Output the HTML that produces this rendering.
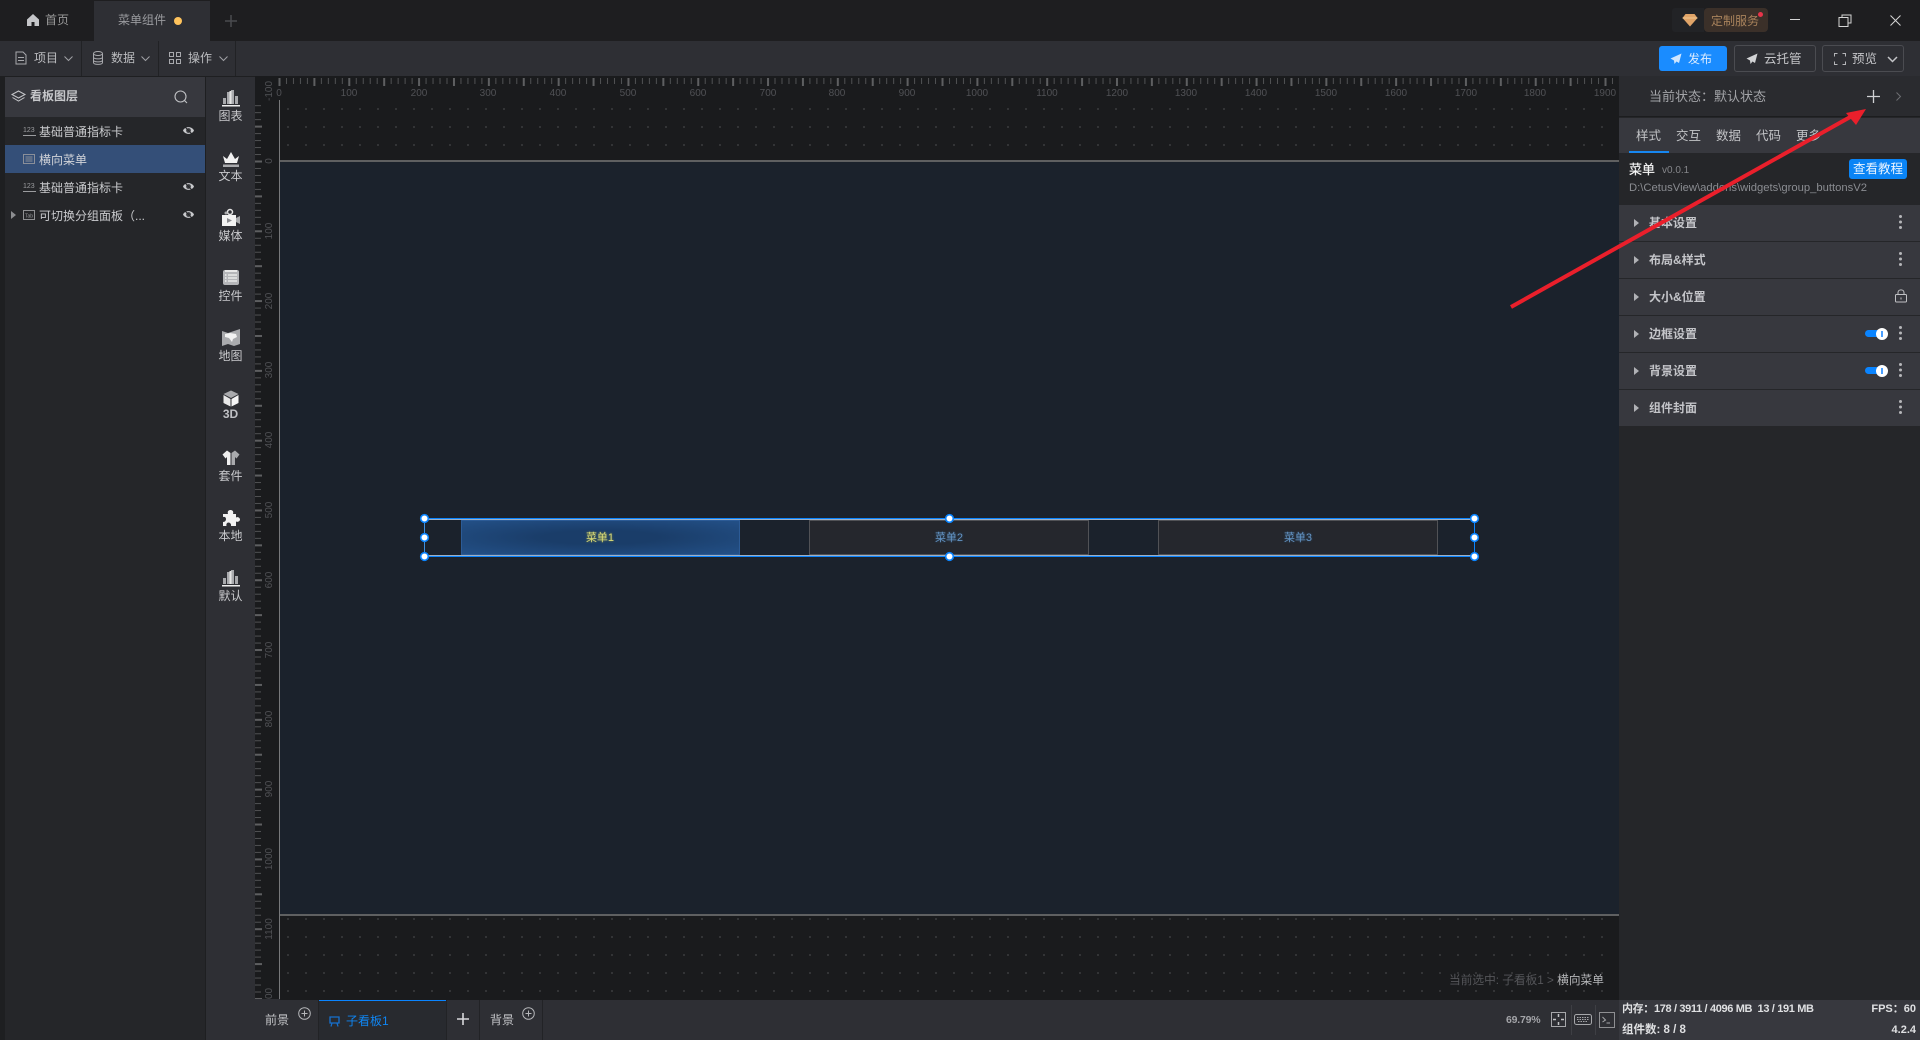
<!DOCTYPE html>
<html><head><meta charset="utf-8"><style>
html,body{margin:0;padding:0;background:#1e1f21;}
#p{position:relative;width:1920px;height:1040px;overflow:hidden;background:#1e1f21;font-family:"Liberation Sans","Noto Sans CJK SC",sans-serif;font-size:12px;color:#c8c9cc;}
.b{position:absolute;}
.t{position:absolute;white-space:nowrap;line-height:16px;}
.c{transform:translateX(-50%);}
svg{position:absolute;overflow:visible;}
.s{left:1619px;width:301px;height:36px;background:#37383e;position:absolute;}
.st{position:absolute;left:30px;top:10px;line-height:16px;font-weight:700;font-size:12px;color:#c4c5c9;}
.tr{position:absolute;left:15px;top:14px;width:0;height:0;border-left:5px solid #b0b1b5;border-top:4.5px solid transparent;border-bottom:4.5px solid transparent;}
.d{position:absolute;left:280px;top:10px;width:3px;height:3px;border-radius:50%;background:#b5b6b9;box-shadow:0 5.5px 0 #b5b6b9,0 11px 0 #b5b6b9;}
.lb{color:#c9cacd;font-size:12px;}
</style></head><body><div id="p">

<!-- top tab bar -->
<div class="b" style="left:0;top:0;width:1920px;height:41px;background:#1e1e20"></div>
<div class="b" style="left:94px;top:1px;width:116px;height:40px;background:#2e2f34"></div>
<svg style="left:26px;top:13px" width="14" height="14" viewBox="0 0 14 14"><path d="M7 1 L1 6.5 V13 H5.5 V9 H8.5 V13 H13 V6.5 Z" fill="#c5c6c9"/></svg>
<div class="t" style="left:45px;top:12px;color:#999">首页</div>
<div class="t" style="left:118px;top:12px;color:#9a9b9f">菜单组件</div>
<div class="b" style="left:174px;top:17px;width:8px;height:8px;border-radius:50%;background:#ffc35c"></div>
<svg style="left:224px;top:14px" width="14" height="14"><path d="M7 1V13M1 7H13" stroke="#4a4b4f" stroke-width="1.5"/></svg>

<!-- window controls -->
<div class="b" style="left:1672px;top:8px;width:32px;height:24px;background:#222326;border-radius:3px 0 0 3px"></div>
<div class="b" style="left:1704px;top:8px;width:64px;height:24px;background:#3b3029;border-radius:4px"></div>
<svg style="left:1682px;top:13px" width="16" height="14" viewBox="0 0 16 14"><path d="M3.5 1H12.5L15.5 5L8 13.5L0.5 5Z" fill="#e0a468"/><path d="M0.5 5H15.5" stroke="#f2c890" stroke-width="1"/></svg>
<div class="t" style="left:1711px;top:13px;color:#a9835c;letter-spacing:0">定制服务</div>
<div class="b" style="left:1758px;top:12px;width:5px;height:5px;border-radius:50%;background:#e8344a"></div>
<div class="b" style="left:1790px;top:19px;width:10px;height:1px;background:#d5d5d5"></div>
<svg style="left:1838px;top:14px" width="14" height="13"><path d="M4 3V1H13V9H10" fill="none" stroke="#d5d5d5"/><rect x="1" y="3.5" width="9" height="9" fill="none" stroke="#d5d5d5"/></svg>
<svg style="left:1890px;top:15px" width="11" height="11"><path d="M0.5 0.5L10.5 10.5M10.5 0.5L0.5 10.5" stroke="#d5d5d5"/></svg>

<!-- toolbar -->
<div class="b" style="left:0;top:41px;width:1920px;height:35px;background:#2e2f34"></div>
<div class="b" style="left:81px;top:41px;width:1px;height:35px;background:#212225"></div>
<div class="b" style="left:158px;top:41px;width:1px;height:35px;background:#212225"></div>
<div class="b" style="left:235px;top:41px;width:1px;height:35px;background:#212225"></div>
<svg style="left:15px;top:51px" width="12" height="14" viewBox="0 0 12 14"><path d="M1 1H8L11 4V13H1ZM3 6.5H9M3 9.5H9" fill="none" stroke="#a8a9ad"/></svg>
<div class="t" style="left:34px;top:50px;color:#bcbdc0">项目</div>
<svg style="left:64px;top:56px" width="9" height="6"><path d="M0.5 0.5L4.5 4.5L8.5 0.5" fill="none" stroke="#a0a1a5"/></svg>
<svg style="left:92px;top:51px" width="12" height="14" viewBox="0 0 12 14"><ellipse cx="6" cy="2.5" rx="4.5" ry="2" fill="none" stroke="#a8a9ad"/><path d="M1.5 2.5V11.5C1.5 14 10.5 14 10.5 11.5V2.5M1.5 6C1.5 8.5 10.5 8.5 10.5 6M1.5 9C1.5 11.5 10.5 11.5 10.5 9" fill="none" stroke="#a8a9ad"/></svg>
<div class="t" style="left:111px;top:50px;color:#bcbdc0">数据</div>
<svg style="left:141px;top:56px" width="9" height="6"><path d="M0.5 0.5L4.5 4.5L8.5 0.5" fill="none" stroke="#a0a1a5"/></svg>
<svg style="left:169px;top:52px" width="12" height="12"><path d="M0.5 0.5H4.5V4.5H0.5ZM7.5 0.5H11.5V4.5H7.5ZM0.5 7.5H4.5V11.5H0.5ZM7.5 7.5H11.5V11.5H7.5Z" fill="none" stroke="#a8a9ad"/></svg>
<div class="t" style="left:188px;top:50px;color:#bcbdc0">操作</div>
<svg style="left:219px;top:56px" width="9" height="6"><path d="M0.5 0.5L4.5 4.5L8.5 0.5" fill="none" stroke="#a0a1a5"/></svg>

<div class="b" style="left:1659px;top:46px;width:68px;height:25px;background:#1a8cff;border-radius:3px"></div>
<svg style="left:1670px;top:53px" width="12" height="12"><path d="M11.5 0.5L0.5 5.5L4 7.5L4.5 11L6.5 8.5L9 10Z" fill="#cfe6ff"/></svg>
<div class="t" style="left:1688px;top:51px;color:#dcecff">发布</div>
<div class="b" style="left:1734px;top:45px;width:80px;height:25px;border:1px solid #4b4c51;border-radius:3px"></div>
<svg style="left:1746px;top:53px" width="12" height="12"><path d="M11.5 0.5L0.5 5.5L4 7.5L4.5 11L6.5 8.5L9 10Z" fill="#d2d3d5"/></svg>
<div class="t" style="left:1764px;top:51px;color:#c4c5c8;font-size:12.5px">云托管</div>
<div class="b" style="left:1822px;top:45px;width:80px;height:25px;border:1px solid #4b4c51;border-radius:3px"></div>
<svg style="left:1834px;top:53px" width="12" height="12"><path d="M0.5 3.5V0.5H3.5M8.5 0.5H11.5V3.5M11.5 8.5V11.5H8.5M3.5 11.5H0.5V8.5" fill="none" stroke="#b5b6b9"/></svg>
<div class="t" style="left:1852px;top:51px;color:#c4c5c8;font-size:12.5px">预览</div>
<svg style="left:1887px;top:56px" width="11" height="7"><path d="M1 1L5.5 5.5L10 1" fill="none" stroke="#c4c5c8" stroke-width="1.5"/></svg>

<!-- left panel -->
<div class="b" style="left:5px;top:77px;width:200px;height:963px;background:#252629"></div>
<div class="b" style="left:5px;top:77px;width:200px;height:40px;background:#37383e"></div>
<svg style="left:11px;top:90px" width="15" height="13" viewBox="0 0 15 13"><path d="M7.5 1L14 4.5L7.5 8L1 4.5Z" fill="none" stroke="#c6c7ca"/><path d="M1.5 7.5L7.5 11L13.5 7.5" fill="none" stroke="#c6c7ca"/></svg>
<div class="t" style="left:30px;top:88px;font-weight:700;color:#c6c7ca">看板图层</div>
<svg style="left:174px;top:90px" width="14" height="14"><circle cx="6.5" cy="6.5" r="5.5" fill="none" stroke="#c0c1c4" stroke-width="1.1"/><path d="M10.5 10.5L13 13" stroke="#c0c1c4" stroke-width="1.1"/></svg>
<div class="b" style="left:5px;top:145px;width:200px;height:28px;background:#344f78"></div>

<svg style="left:23px;top:125px" width="13" height="12"><text x="0" y="7" font-size="7" fill="#9b9c9f" font-family="Liberation Sans">123</text><path d="M0 10.5H13" stroke="#9b9c9f"/></svg>
<div class="t" style="left:39px;top:124px;color:#c9cacd">基础普通指标卡</div>
<svg style="left:182px;top:125px" width="13" height="11"><path d="M1 5.5C3 1 10 1 12 5.5C10 10 3 10 1 5.5Z" fill="#c8c9cc"/><circle cx="6.5" cy="5.5" r="2.4" fill="#3a3b3f"/><path d="M2 1L11 10" stroke="#252629"/></svg>

<svg style="left:23px;top:154px" width="12" height="10"><rect x="0.5" y="0.5" width="11" height="9" fill="none" stroke="#8a8f99"/><path d="M2.5 3H9.5M2.5 5H9.5M2.5 7H9.5" stroke="#8a8f99"/></svg>
<div class="t" style="left:39px;top:152px;color:#d2d4d9">横向菜单</div>

<svg style="left:23px;top:181px" width="13" height="12"><text x="0" y="7" font-size="7" fill="#9b9c9f" font-family="Liberation Sans">123</text><path d="M0 10.5H13" stroke="#9b9c9f"/></svg>
<div class="t" style="left:39px;top:180px;color:#c9cacd">基础普通指标卡</div>
<svg style="left:182px;top:181px" width="13" height="11"><path d="M1 5.5C3 1 10 1 12 5.5C10 10 3 10 1 5.5Z" fill="#c8c9cc"/><circle cx="6.5" cy="5.5" r="2.4" fill="#3a3b3f"/><path d="M2 1L11 10" stroke="#252629"/></svg>

<div class="b" style="left:11px;top:211px;width:0;height:0;border-left:5px solid #8c8d90;border-top:4px solid transparent;border-bottom:4px solid transparent"></div>
<svg style="left:23px;top:210px" width="12" height="10"><rect x="0.5" y="0.5" width="11" height="9" fill="none" stroke="#8f9093"/><text x="2" y="7.5" font-size="5" fill="#9b9c9f" font-family="Liberation Sans">Tab</text></svg>
<div class="t" style="left:39px;top:208px;color:#c9cacd">可切换分组面板（...</div>
<svg style="left:182px;top:209px" width="13" height="11"><path d="M1 5.5C3 1 10 1 12 5.5C10 10 3 10 1 5.5Z" fill="#c8c9cc"/><circle cx="6.5" cy="5.5" r="2.4" fill="#3a3b3f"/><path d="M2 1L11 10" stroke="#252629"/></svg>

<!-- sidebar -->
<div class="b" style="left:206px;top:77px;width:49px;height:963px;background:#2e2f34"></div>
<svg style="left:222px;top:89px" width="18" height="18" viewBox="0 0 18 18"><path d="M1 15V9H4V15ZM5 15V3H8V15ZM9 15V1H12V15ZM13 15V7H16V15Z" fill="#a9aaad"/><path d="M7.5 15V2H9.5V15Z" fill="#e5e5e5"/><rect x="0" y="16" width="18" height="1.5" fill="#eee"/></svg>
<div class="t c lb" style="left:230.5px;top:108px">图表</div>
<svg style="left:222px;top:151px" width="18" height="17" viewBox="0 0 18 17"><path d="M1 5L5 8L9 1L13 8L17 5L15 12H3Z" fill="#f2f2f2"/><rect x="1" y="13.5" width="16" height="2.5" fill="#a9aaad"/></svg>
<div class="t c lb" style="left:230.5px;top:168px">文本</div>
<svg style="left:222px;top:209px" width="18" height="17" viewBox="0 0 18 17"><circle cx="8" cy="3" r="2.5" fill="none" stroke="#e6e6e6" stroke-width="1.5"/><circle cx="4" cy="4" r="1.5" fill="#a9aaad"/><rect x="0" y="6" width="14" height="11" fill="#f2f2f2"/><path d="M14 9L18 7V15L14 13Z" fill="#a9aaad"/><path d="M5 9L10 11.5L5 14Z" fill="#8a8b8f"/></svg>
<div class="t c lb" style="left:230.5px;top:228px">媒体</div>
<svg style="left:222px;top:269px" width="18" height="17" viewBox="0 0 18 17"><rect x="1" y="1" width="16" height="15" rx="2" fill="#b5b6b9"/><path d="M3 1H15V3H3Z" fill="#e8e8e8"/><path d="M6 6H15M6 9H15M6 12H15" stroke="#e8e8e8" stroke-width="1.4"/><path d="M3 6H4.5M3 9H4.5M3 12H4.5" stroke="#f0f0f0" stroke-width="1.4"/></svg>
<div class="t c lb" style="left:230.5px;top:288px">控件</div>
<svg style="left:222px;top:329px" width="18" height="18" viewBox="0 0 18 18"><path d="M0 2L6 4L12 2L18 0V15L12 17L6 15L0 17Z" fill="#a9aaad"/><path d="M3 5L8 4L14 5L15 8L11 10L10 13L7 9L3 8Z" fill="#f2f2f2"/></svg>
<div class="t c lb" style="left:230.5px;top:348px">地图</div>
<svg style="left:222px;top:390px" width="18" height="17" viewBox="0 0 18 17"><path d="M9 0.5L16.5 4L9 8L1.5 4Z" fill="#a9aaad"/><path d="M1.5 5L8.5 9V16.5L1.5 13Z" fill="#e8e8e8"/><path d="M16.5 5L9.5 9V16.5L16.5 13Z" fill="#f5f5f5"/></svg>
<div class="t c lb" style="left:230.5px;top:406px;font-weight:700;color:#bfc0c4">3D</div>
<svg style="left:222px;top:450px" width="18" height="16" viewBox="0 0 18 16"><path d="M5 0.5L0.5 4.5L3.5 8.5L5 7V15H8.5V3Z" fill="#efefef"/><path d="M13 0.5L17.5 4.5L14.5 8.5L13 7V15H9.5V3Z" fill="#a9aaad"/></svg>
<div class="t c lb" style="left:230.5px;top:468px">套件</div>
<svg style="left:222px;top:510px" width="18" height="17" viewBox="0 0 18 17"><path d="M1 4H6C5 1 7 0 8.5 0C10 0 12 1 11 4H14V7.5C16 6.5 18 8 18 9.5C18 11 16 12.5 14 11.5V16H9C9.5 14 8 12.5 6.5 12.5C5 12.5 4 14 4.5 16H1V12C3 12 4 10.5 4 9C4 7.5 3 6.5 1 7Z" fill="#f2f2f2"/></svg>
<div class="t c lb" style="left:230.5px;top:528px">本地</div>
<svg style="left:222px;top:569px" width="18" height="18" viewBox="0 0 18 18"><path d="M1 15V9H4V15ZM5 15V3H8V15ZM9 15V1H12V15ZM13 15V7H16V15Z" fill="#a9aaad"/><path d="M7.5 15V2H9.5V15Z" fill="#e5e5e5"/><rect x="0" y="16" width="18" height="1.5" fill="#eee"/></svg>
<div class="t c lb" style="left:230.5px;top:588px">默认</div>

<!-- canvas -->
<div class="b" style="left:255px;top:76px;width:1365px;height:924px;background:#1a1b1d"></div>
<svg style="left:0;top:0" width="1920" height="1040">
<defs>
<pattern id="dots" x="287" y="108" width="18" height="18" patternUnits="userSpaceOnUse"><rect width="2" height="2" fill="#333436"/></pattern>
<pattern id="htick" x="279" y="78" width="6.979" height="6" patternUnits="userSpaceOnUse"><rect width="1" height="6" fill="#505153"/></pattern>
<pattern id="hbig" x="278.5" y="78" width="34.895" height="8" patternUnits="userSpaceOnUse"><rect width="2" height="8" fill="#5e5f61"/></pattern>
<pattern id="vtick" x="255" y="161" width="7" height="6.979" patternUnits="userSpaceOnUse"><rect width="6" height="1" fill="#505153"/></pattern>
<pattern id="vbig" x="255" y="160.5" width="8" height="34.895" patternUnits="userSpaceOnUse"><rect width="7" height="2" fill="#5e5f61"/></pattern>
</defs>
<rect x="280" y="100" width="1340" height="900" fill="url(#dots)"/>
<rect x="279" y="78" width="1341" height="6" fill="url(#htick)"/>
<rect x="278" y="78" width="1342" height="8" fill="url(#hbig)"/>
<rect x="255" y="100" width="6" height="899" fill="url(#vtick)"/>
<rect x="255" y="100" width="7" height="899" fill="url(#vbig)"/>
<g font-family="Liberation Sans" font-size="10" fill="#505155" text-anchor="middle">
<text x="279" y="96">0</text><text x="349" y="96">100</text><text x="419" y="96">200</text><text x="488" y="96">300</text><text x="558" y="96">400</text><text x="628" y="96">500</text><text x="698" y="96">600</text><text x="768" y="96">700</text><text x="837" y="96">800</text><text x="907" y="96">900</text><text x="977" y="96">1000</text><text x="1047" y="96">1100</text><text x="1117" y="96">1200</text><text x="1186" y="96">1300</text><text x="1256" y="96">1400</text><text x="1326" y="96">1500</text><text x="1396" y="96">1600</text><text x="1466" y="96">1700</text><text x="1535" y="96">1800</text><text x="1605" y="96">1900</text>
<text transform="translate(272,91) rotate(-90)">-100</text><text transform="translate(272,161) rotate(-90)">0</text><text transform="translate(272,231) rotate(-90)">100</text><text transform="translate(272,301) rotate(-90)">200</text><text transform="translate(272,370) rotate(-90)">300</text><text transform="translate(272,440) rotate(-90)">400</text><text transform="translate(272,510) rotate(-90)">500</text><text transform="translate(272,580) rotate(-90)">600</text><text transform="translate(272,650) rotate(-90)">700</text><text transform="translate(272,719) rotate(-90)">800</text><text transform="translate(272,789) rotate(-90)">900</text><text transform="translate(272,859) rotate(-90)">1000</text><text transform="translate(272,929) rotate(-90)">1100</text><text transform="translate(272,999) rotate(-90)">1200</text>
</g>
</svg>
<div class="b" style="left:255px;top:999px;width:25px;height:1px;background:#2e2f34"></div>
<div class="b" style="left:279px;top:100px;width:1px;height:899px;background:#77787a"></div>
<div class="b" style="left:280px;top:162px;width:1340px;height:752px;background:#1b222c"></div>
<div class="b" style="left:280px;top:160px;width:1340px;height:2px;background:#5f6061"></div>
<div class="b" style="left:280px;top:914px;width:1340px;height:2px;background:#5f6061"></div>

<!-- menu component -->
<div class="b" style="left:461px;top:520px;width:279px;height:35px;box-sizing:border-box;border:1px solid #2c5b96;background:radial-gradient(ellipse at center,#1a3d69 30%,#235087 100%)"></div>
<div class="b" style="left:809px;top:520px;width:280px;height:35px;box-sizing:border-box;border:1px solid #515256;background:#25272d"></div>
<div class="b" style="left:1158px;top:520px;width:280px;height:35px;box-sizing:border-box;border:1px solid #515256;background:#25272d"></div>
<div class="t c" style="left:600px;top:530px;color:#d9dc7a;font-size:11px;text-shadow:0 0 2px #8d8d3a">菜单1</div>
<div class="t c" style="left:949px;top:530px;color:#6494c4;font-size:11px;text-shadow:0 0 2px #2f5070">菜单2</div>
<div class="t c" style="left:1298px;top:530px;color:#6494c4;font-size:11px;text-shadow:0 0 2px #2f5070">菜单3</div>
<div class="b" style="left:424px;top:518px;width:1050px;height:1px;background:#0a84ff"></div>
<div class="b" style="left:424px;top:519px;width:1050px;height:1px;background:#9fb0c4"></div>
<div class="b" style="left:424px;top:555px;width:1050px;height:1px;background:#9fb0c4"></div>
<div class="b" style="left:424px;top:556px;width:1050px;height:1px;background:#0a84ff"></div>
<div class="b" style="left:424px;top:518px;width:1px;height:39px;background:#3d8fe0"></div>
<div class="b" style="left:1474px;top:518px;width:1px;height:39px;background:#0a84ff"></div>
<svg style="left:0;top:0" width="1920" height="1040"><g fill="#fff" stroke="#0a84ff" stroke-width="1.6"><circle cx="424.5" cy="518.5" r="3.8"/><circle cx="949.5" cy="518.5" r="3.8"/><circle cx="1474.5" cy="518.5" r="3.8"/><circle cx="424.5" cy="537.5" r="3.8"/><circle cx="1474.5" cy="537.5" r="3.8"/><circle cx="424.5" cy="556.5" r="3.8"/><circle cx="949.5" cy="556.5" r="3.8"/><circle cx="1474.5" cy="556.5" r="3.8"/></g></svg>

<div class="t" style="left:1449px;top:973px;color:#55565a;font-size:11.7px">当前选中: 子看板1 &gt; <span style="color:#b5b6b9">横向菜单</span></div>

<!-- right panel -->
<div class="b" style="left:1619px;top:76px;width:301px;height:964px;background:#252629"></div>
<div class="b" style="left:1619px;top:76px;width:301px;height:40px;background:#2a2b2f"></div>
<div class="t" style="left:1649px;top:89px;color:#a3a4a8;font-size:13px">当前状态：默认状态</div>
<svg style="left:1867px;top:90px" width="13" height="13"><path d="M6.5 0V13M0 6.5H13" stroke="#d0d1d4" stroke-width="1.3"/></svg>
<svg style="left:1896px;top:92px" width="5" height="9"><path d="M0.5 0.5L4.5 4.5L0.5 8.5" fill="none" stroke="#6e6f73"/></svg>
<div class="b" style="left:1619px;top:116px;width:301px;height:1px;background:#1c1d1f"></div>
<div class="b" style="left:1619px;top:118px;width:301px;height:35px;background:#37383e"></div>
<div class="t" style="left:1636px;top:128px;color:#c2c3c6;font-size:12.5px">样式</div>
<div class="t" style="left:1676px;top:128px;color:#c2c3c6;font-size:12.5px">交互</div>
<div class="t" style="left:1716px;top:128px;color:#c2c3c6;font-size:12.5px">数据</div>
<div class="t" style="left:1756px;top:128px;color:#c2c3c6;font-size:12.5px">代码</div>
<div class="t" style="left:1796px;top:128px;color:#c2c3c6;font-size:12.5px">更多</div>
<div class="b" style="left:1629px;top:151px;width:40px;height:2px;background:#1787f0"></div>
<div class="t" style="left:1629px;top:162px;color:#f5f5f5;font-size:13px;-webkit-text-stroke:.2px #f5f5f5">菜单</div>
<div class="t" style="left:1662px;top:163px;color:#85868a;font-size:10px">v0.0.1</div>
<div class="b" style="left:1849px;top:159px;width:58px;height:20px;background:#0a84f5;border-radius:3px;color:#e8f3ff;text-align:center;line-height:20px;font-size:12.5px">查看教程</div>
<div class="t" style="left:1629px;top:180px;color:#8a8c91;font-size:11.25px">D:\CetusView\addons\widgets\group_buttonsV2</div>

<div class="s" style="top:205px"><div class="tr"></div><div class="st">基本设置</div><div class="d"></div></div>
<div class="s" style="top:242px"><div class="tr"></div><div class="st">布局&amp;样式</div><div class="d"></div></div>
<div class="s" style="top:279px"><div class="tr"></div><div class="st">大小&amp;位置</div></div>
<div class="s" style="top:316px"><div class="tr"></div><div class="st">边框设置</div><div class="d"></div></div>
<div class="s" style="top:353px"><div class="tr"></div><div class="st">背景设置</div><div class="d"></div></div>
<div class="s" style="top:390px"><div class="tr"></div><div class="st">组件封面</div><div class="d"></div></div>
<svg style="left:1895px;top:289px" width="12" height="14"><rect x="0.5" y="5.5" width="11" height="7.5" rx="1" fill="none" stroke="#c0c1c4"/><path d="M3 5.5V3.5C3 0 9 0 9 3.5V5.5" fill="none" stroke="#c0c1c4"/><rect x="5.5" y="8.5" width="1" height="2" fill="#c0c1c4"/></svg>
<div class="b" style="left:1865px;top:330px;width:18px;height:7px;background:#0a84ff;border-radius:4px"></div>
<div class="b" style="left:1876px;top:328px;width:12px;height:12px;background:#fff;border-radius:50%"></div>
<div class="b" style="left:1881px;top:331px;width:2px;height:6px;background:#4a9fff"></div>
<div class="b" style="left:1865px;top:367px;width:18px;height:7px;background:#0a84ff;border-radius:4px"></div>
<div class="b" style="left:1876px;top:365px;width:12px;height:12px;background:#fff;border-radius:50%"></div>
<div class="b" style="left:1881px;top:368px;width:2px;height:6px;background:#4a9fff"></div>

<!-- red arrow -->
<svg style="left:0;top:0" width="1920" height="1040"><path d="M1511 307L1852 116" stroke="#ea1f2b" stroke-width="4"/><path d="M1866 109L1846 113L1856 125Z" fill="#ea1f2b"/></svg>

<!-- bottom bar -->
<div class="b" style="left:255px;top:1000px;width:1365px;height:40px;background:#2e2f34"></div>
<div class="b" style="left:318px;top:1000px;width:1px;height:40px;background:#222326"></div>
<div class="b" style="left:319px;top:1000px;width:127px;height:40px;background:#282a2f"></div>
<div class="b" style="left:319px;top:1000px;width:127px;height:1px;background:#0a84ff"></div>
<div class="b" style="left:446px;top:1000px;width:1px;height:40px;background:#222326"></div>
<div class="b" style="left:479px;top:1000px;width:1px;height:40px;background:#222326"></div>
<div class="b" style="left:542px;top:1000px;width:1px;height:40px;background:#222326"></div>
<div class="t" style="left:265px;top:1012px;color:#c2c3c6">前景</div>
<svg style="left:298px;top:1007px" width="13" height="13"><circle cx="6.5" cy="6.5" r="5.8" fill="none" stroke="#b5b6b9"/><path d="M6.5 3.5V9.5M3.5 6.5H9.5" stroke="#b5b6b9"/></svg>
<svg style="left:329px;top:1016px" width="11" height="11"><path d="M1 1H10V7H1ZM3 7L2 10.5M8 7L9 10.5" fill="none" stroke="#1670cf" stroke-width="1.3"/></svg>
<div class="t" style="left:346px;top:1013px;color:#0f85f2">子看板1</div>
<svg style="left:457px;top:1013px" width="12" height="12"><path d="M6 0V12M0 6H12" stroke="#d8d9db" stroke-width="1.6"/></svg>
<div class="t" style="left:490px;top:1012px;color:#c2c3c6">背景</div>
<svg style="left:522px;top:1007px" width="13" height="13"><circle cx="6.5" cy="6.5" r="5.8" fill="none" stroke="#b5b6b9"/><path d="M6.5 3.5V9.5M3.5 6.5H9.5" stroke="#b5b6b9"/></svg>
<div class="t" style="left:1506px;top:1012px;color:#a3a4a8;font-size:10.5px;font-weight:700;letter-spacing:-.2px">69.79%</div>
<svg style="left:1551px;top:1012px" width="15" height="15"><rect x="0.5" y="0.5" width="14" height="14" fill="none" stroke="#a6a7aa"/><path d="M7.5 2V5M7.5 10V13M2 7.5H5M10 7.5H13" stroke="#c2c3c6" stroke-width="1.5"/></svg>
<div class="b" style="left:1571px;top:1005px;width:1px;height:30px;background:#3e3f44"></div>
<svg style="left:1574px;top:1014px" width="18" height="11"><rect x="0.5" y="0.5" width="17" height="10" rx="2" fill="none" stroke="#a6a7aa"/><path d="M3 3.5H15M3 5.5H15M4 7.5H14" stroke="#a6a7aa" stroke-dasharray="1.5 1"/></svg>
<div class="b" style="left:1595px;top:1005px;width:1px;height:30px;background:#3e3f44"></div>
<svg style="left:1599px;top:1012px" width="16" height="16"><rect x="0.5" y="0.5" width="15" height="15" fill="none" stroke="#8e8f92"/><path d="M3.5 5L6.5 8L3.5 10M7.5 11H11" fill="none" stroke="#a6a7aa"/></svg>

<div class="b" style="left:1619px;top:1000px;width:301px;height:40px;background:#37383e"></div>
<div class="t" style="left:1622px;top:1001px;color:#dfe0e2;font-size:11px;font-weight:700;letter-spacing:-.35px">内存：178 / 3911 / 4096 MB&nbsp; 13 / 191 MB</div>
<div class="t" style="right:4px;top:1001px;color:#dfe0e2;font-size:11px;font-weight:700">FPS：60</div>
<div class="t" style="left:1622px;top:1022px;color:#dfe0e2;font-size:11.5px;font-weight:700">组件数: 8 / 8</div>
<div class="t" style="right:4px;top:1022px;color:#dfe0e2;font-size:11px;font-weight:700">4.2.4</div>
</div></body></html>
